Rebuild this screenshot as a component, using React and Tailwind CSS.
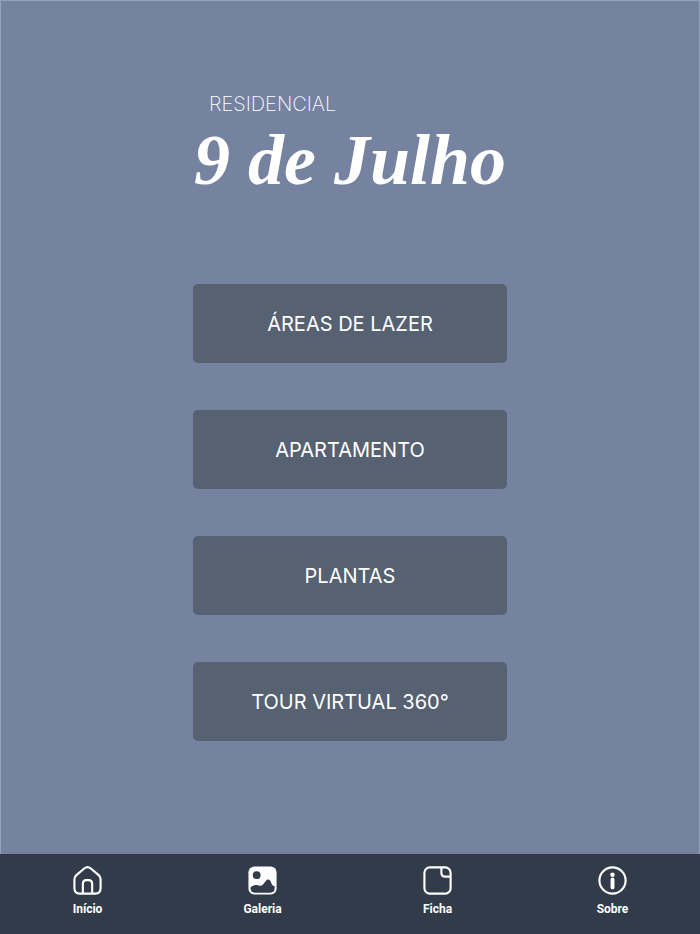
import { useState } from "react"

const menu = [
  { id: "lazer", label: "ÁREAS DE LAZER" },
  { id: "apartamento", label: "APARTAMENTO" },
  { id: "plantas", label: "PLANTAS" },
  { id: "tour", label: "TOUR VIRTUAL 360°" },
]

function IconInicio() {
  return (
    <svg className="size-8" viewBox="0 0 33 33" fill="none" stroke="currentColor" strokeWidth="2.2" aria-hidden="true">
      <path d="M2.500 14.500c0-1.800.6-2.900 2-4.100l8.400-7c1.900-1.600 4.300-1.600 6.200 0l8.400 7c1.400 1.200 2 2.300 2 4.100v9.500c0 3.700-1.800 5.500-5.500 5.500H8c-3.700 0-5.500-1.800-5.500-5.500z" />
      <path d="M11.200 29V19.500c0-2.600 1.200-3.900 3.700-3.900h2.200c2.500 0 3.700 1.300 3.700 3.900V29" />
    </svg>
  )
}

function IconGaleria() {
  return (
    <svg className="size-8" viewBox="0 0 33 33" aria-hidden="true">
      <rect x="1.500" y="1.500" width="29" height="29" rx="6" fill="currentColor" />
      <circle cx="10" cy="10.500" r="4" fill="#323b49" />
      <path d="M3.500 23.500c2-2.200 5-3.300 7.500-2.500 2 .7 4 .7 5.700-1.200l2.900-3.600c1.500-1.900 3.600-1.700 4.600.4l1.400 3.200c.6 1.200 1.700 2 2.900 1.900v2.300c0 3-1.500 4.500-4.500 4.500H8c-2.700 0-4.200-1.500-4.500-5z" fill="#323b49" />
    </svg>
  )
}

function IconFicha() {
  return (
    <svg className="size-8" viewBox="0 0 33 33" fill="none" stroke="currentColor" strokeWidth="2.2" aria-hidden="true">
      <rect x="2.500" y="2.500" width="27" height="27" rx="5.500" />
      <path d="M20 2.500V8c0 2.700 1.300 4 4 4h5.500" />
    </svg>
  )
}

function IconSobre() {
  return (
    <svg className="size-8" viewBox="0 0 33 33" fill="none" aria-hidden="true">
      <circle cx="16" cy="16" r="13.500" stroke="currentColor" strokeWidth="2.2" />
      <circle cx="16" cy="10" r="2.300" fill="currentColor" />
      <rect x="14" y="13" width="4" height="12" rx="1.900" fill="currentColor" />
    </svg>
  )
}

const tabs = [
  { id: "inicio", label: "Início", Icon: IconInicio },
  { id: "galeria", label: "Galeria", Icon: IconGaleria },
  { id: "ficha", label: "Ficha", Icon: IconFicha },
  { id: "sobre", label: "Sobre", Icon: IconSobre },
]

export default function App() {
  const [tab, setTab] = useState("inicio")

  return (
    <div className="min-h-screen flex flex-col bg-[#7583a0] text-white font-['Inter',sans-serif]">
      <main className="flex-1 flex flex-col items-center border border-b-0 border-[#93a2b8] pt-[91px] pb-12">
        {/* Logo */}
        <h1 className="w-[45%] min-w-72 whitespace-nowrap">
          <span className="block pl-4 text-[20px] leading-6 font-extralight">RESIDENCIAL</span>
          <span className="block text-center text-[72px] leading-[88px] font-bold italic font-['Liberation_Serif',serif]">
            9 de Julho
          </span>
        </h1>

        {/* Menu principal */}
        <div className="w-[45%] min-w-72 mt-20 flex flex-col gap-[47px]">
          {menu.map(item => (
            <button
              key={item.id}
              type="button"
              className="h-[79px] pt-px rounded-[5px] bg-[#566171] text-[20px] font-normal cursor-pointer"
            >
              {item.label}
            </button>
          ))}
        </div>
      </main>

      {/* Barra inferior */}
      <nav className="h-20 grid grid-cols-4 bg-[#323b49] font-['Roboto',sans-serif]">
        {tabs.map(({ id, label, Icon }) => (
          <button
            key={id}
            type="button"
            onClick={() => setTab(id)}
            aria-current={tab === id ? "page" : undefined}
            className="flex flex-col items-center gap-1 pt-[11px] cursor-pointer"
          >
            <Icon />
            <span className="text-xs font-bold">{label}</span>
          </button>
        ))}
      </nav>
    </div>
  )
}
